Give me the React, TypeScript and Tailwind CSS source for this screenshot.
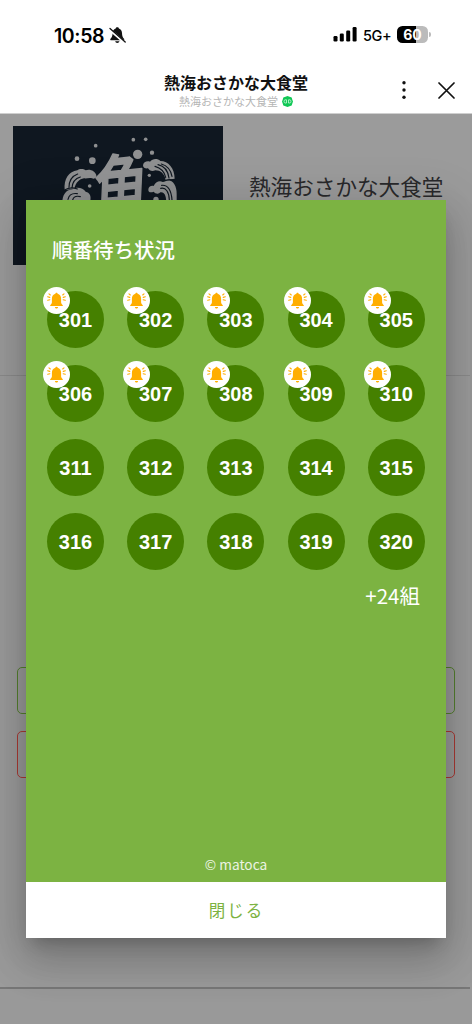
import React from "react";

const SHOP = "熱海おさかな大食堂";
const CALLED = 10;
const tickets = Array.from({ length: 20 }, (_, i) => 301 + i);

function BellOff() {
  return (
    <svg className="ml-[4px] mt-px h-[18px] w-[17px]" viewBox="0 0 17 18">
      <path d="M8.3 1.2c-.9 0-1.500.5-1.600 1.200C4.500 3 3.700 4.800 3.600 7c-.1 3-.8 4.300-2.100 5.800-.6.8-.2 1.500.7 1.500h12.100c1 0 1.300-.8.700-1.500-1.300-1.500-1.900-2.800-2-5.800-.1-2.200-1-4-3.100-4.600-.1-.7-.7-1.200-1.600-1.200ZM6.200 15.200c.2 1 1.100 1.700 2.100 1.700s1.900-.7 2.100-1.700Z" fill="#111" />
      <path d="M.3 3.200 15.500 16.600" stroke="#fff" strokeWidth="2.600" />
      <path d="M1 2.400 16.200 16" stroke="#111" strokeWidth="1.300" strokeLinecap="round" />
    </svg>
  );
}

function StatusBar() {
  return (
    <div className="flex h-[68px] items-start pl-[54px] pr-[41px] pt-[25px] text-black">
      <span className="mt-px w-[51px] whitespace-nowrap font-[Inter] text-[19.5px] font-semibold leading-5 tracking-[-0.4px]">10:58</span>
      <BellOff />
      <svg className="ml-auto mt-[2px] h-[16px] w-[24px]" viewBox="0 0 24 16">
        <rect x="0.5" y="9" width="4" height="5.500" rx="1.200" />
        <rect x="6.800" y="6.500" width="4" height="8" rx="1.200" />
        <rect x="13.200" y="3.500" width="4" height="11" rx="1.200" />
        <rect x="19.600" y="0" width="4" height="14.500" rx="1.200" />
      </svg>
      <span className="ml-[6px] w-[28px] whitespace-nowrap font-[Inter] text-[14.5px] font-medium leading-[21px] tracking-[-0.4px]">5G+</span>
      <div className="ml-[6px] mt-px flex h-[17px] w-[31px] items-center justify-center rounded-[5.5px] bg-[linear-gradient(90deg,#000_60%,#bbb_60%)] font-[Inter] text-[14px] font-bold text-white">
        60
      </div>
      <span className="ml-[1px] mt-[7px] h-[5px] w-[2px] rounded-r-full bg-[#bbb]" />
    </div>
  );
}

function TitleBar() {
  return (
    <header className="grid h-[46px] grid-cols-[100px_1fr_100px] border-b border-[#cfcfcf]">
      <div />
      <div className="flex flex-col items-center pt-[4px]">
        <h1 className="text-[16px] font-bold leading-5 text-[#111]">{SHOP}</h1>
        <p className="mt-[2px] flex items-center gap-[4px] text-[11px] leading-[15px] text-[#b5b5b5]">
          {SHOP}
          <svg className="h-[11px] w-[11px]" viewBox="0 0 11 11">
            <path d="M5.500 0 7.500.8 9.700 1.500 10.300 3.700 11 5.500 10.300 7.400 9.700 9.600 7.500 10.300 5.500 11 3.500 10.300 1.300 9.600.7 7.400 0 5.500.7 3.700 1.300 1.500 3.500.8Z" fill="#10c755" />
            <path d="M3 3.800h1.500v3.200H3c-1.300 0-1.300-3.200 0-3.200ZM6.500 3.800H8c1.300 0 1.300 3.200 0 3.200H6.500Z" fill="none" stroke="#c9f7d8" strokeWidth=".8" />
          </svg>
        </p>
      </div>
      <div className="flex items-start justify-end gap-[32px] pr-[17px] pt-[13px]">
        <svg className="h-[18px] w-[4px]" viewBox="0 0 4 18" fill="#111">
          <circle cx="2" cy="1.700" r="1.700" />
          <circle cx="2" cy="9" r="1.700" />
          <circle cx="2" cy="16.300" r="1.700" />
        </svg>
        <svg className="mt-px h-[17px] w-[17px]" viewBox="0 0 17 17" stroke="#111" strokeWidth="1.700" strokeLinecap="round">
          <path d="m1 1 15 15M16 1 1 16" />
        </svg>
      </div>
    </header>
  );
}

function ShopLogo() {
  return (
    <svg className="h-[139px] w-[210px]" viewBox="39 48 630 417">
      <rect x="39" y="48" width="630" height="417" fill="#0f1720" />
      <g fill="#8f9091">
        <circle cx="231" cy="146" r="7" />
        <circle cx="277" cy="152" r="10" />
        <circle cx="287" cy="107" r="5.500" />
        <circle cx="400" cy="89" r="5.500" />
        <circle cx="437" cy="88" r="5.500" />
        <circle cx="413" cy="133" r="14" />
        <circle cx="456" cy="128" r="6.500" />
        <circle cx="269" cy="228" r="5.500" />
        <circle cx="448" cy="196" r="5" />
        <circle cx="468" cy="268" r="8" />
        <path d="M194 240C191 207 207 184 232 181c6-6 19-5 25 0 13-5 28 2 32 15 2 8-6 12-13 9-8-3-17 2-24 0-14 2-25 13-29 31Z" />
        <path d="M187 278c0-22 10-38 30-40 13-9 32-5 40 7 12 2 17 13 14 27H187Z" />
        <path d="M429 166c1-10 12-14 21-11 8-10 23-10 31-2 24 0 43 22 43 53l-27 4c-4-20-16-29-31-29-10 4-18 1-22-6-7 1-15-1-15-9Z" />
        <path d="M445 239c0-8 8-13 16-11 5-12 17-17 27-12 24-16 43 6 42 36v30h-31c0-20-3-37-18-35-5 7-16 4-20-2-9 4-16 2-16-6Z" />
      </g>
      <g fill="none" stroke="#0f1720" strokeWidth="3.500" strokeLinecap="round">
        <path d="M207 232c0-20 10-34 26-40M216 234c1-17 11-29 25-33" />
        <path d="M204 268c3-13 14-19 28-17M218 270c3-10 12-13 23-10" />
        <path d="M192 241c12-8 26-10 40-4" />
        <path d="M474 164c18 4 30 18 33 40M465 169c18 5 28 15 32 33M484 162c18 5 28 17 32 37" />
        <path d="M482 235c16-4 25 12 26 35M485 226c20-2 29 17 31 44M491 214c14-8 24-7 34 0" />
      </g>
      <text
        transform="matrix(1 -0.1 -0.06 1.35 276 330)"
        fontSize="168"
        fontWeight="500"
        fill="#929394"
        stroke="#929394"
        strokeWidth="4"
        strokeLinejoin="round"
        fontFamily="Noto Sans CJK JP, sans-serif"
      >
        魚
      </text>
    </svg>
  );
}

function CallBadge() {
  return (
    <span className="absolute -left-[4px] -top-[4px] flex size-[27px] items-center justify-center rounded-full bg-white">
      <svg className="h-[17px] w-[19px]" viewBox="0 0 19 17">
        <path d="M9.500.7c-.7 0-1.100.5-1.100 1.100-2.300.6-3.500 2.400-3.500 5v3.500c0 1.200-.7 1.900-1.700 2.900v.9h12.600v-.9c-1-1-1.700-1.700-1.700-2.900V6.800c0-2.600-1.200-4.400-3.500-5 0-.6-.4-1.100-1.100-1.100ZM7.900 14.900h3.200c-.2 1-.9 1.500-1.600 1.500s-1.400-.5-1.600-1.500Z" fill="#ffae00" />
        <path d="m3.300 3-1.300-1.100M2.800 5.400.6 4.800M2.900 7.800l-2.200.5M15.700 3l1.300-1.100M16.200 5.400l2.200-.6M16.100 7.800l2.200.5" fill="none" stroke="#ffae00" strokeWidth="1.100" strokeLinecap="round" />
      </svg>
    </span>
  );
}

function QueueDialog() {
  return (
    <section className="flex h-[738px] w-[420px] flex-col bg-[#7cb342] text-white shadow-[0_11px_15px_-7px_rgba(0,0,0,0.2),0_24px_38px_3px_rgba(0,0,0,0.14),0_9px_46px_8px_rgba(0,0,0,0.12)]">
      <h2 className="pl-[26px] pt-[35px] text-[20.5px] font-medium leading-[28px]">順番待ち状況</h2>
      <ul className="ml-[21px] mt-[27.5px] grid grid-cols-[repeat(5,57px)] gap-x-[23.2px] gap-y-[17.2px]">
        {tickets.map((n, i) => (
          <li
            key={n}
            className="relative flex size-[57px] items-center justify-center rounded-full bg-[#458000] font-['Liberation_Sans'] text-[20px] font-bold"
          >
            {i < CALLED && <CallBadge />}
            <span className="relative pt-px">{n}</span>
          </li>
        ))}
      </ul>
      <p className="mr-[26px] mt-[9.5px] text-right text-[20.5px] leading-[30px]">+24組</p>
      <p className="mt-auto pb-[8px] text-center text-[13.7px] leading-5 text-white/85">© matoca</p>
      <button className="h-[56px] shrink-0 bg-white pl-px text-[16.5px] font-normal tracking-[2px] text-[#7cb342]">閉じる</button>
    </section>
  );
}

export default function App() {
  return (
    <div className="flex h-[1024px] w-[472px] flex-col overflow-hidden bg-white font-['Noto_Sans_CJK_JP',sans-serif]">
      <StatusBar />
      <TitleBar />
      <div className="relative min-h-0 flex-1 bg-[#999]">
        <main className="mr-[2px] flex h-[875px] flex-col border-b-2 border-[#777] bg-[#9b9b9b]">
          <div className="flex h-[262px] shrink-0 border-b border-[#8b8b8b] pl-[13px] pt-[12px]">
            <ShopLogo />
            <p className="ml-[26px] mt-[44px] whitespace-nowrap text-[21.6px] leading-[32px] text-[#29292b]">{SHOP}</p>
          </div>
          <div className="mt-[291px] flex flex-col gap-[17px] pl-[17px] pr-[15px]">
            <div className="h-[47px] rounded-[5px] border-[1.5px] border-[#55802f]" />
            <div className="h-[47px] rounded-[5px] border-[1.5px] border-[#ab3a35]" />
          </div>
        </main>
        <div className="absolute inset-0 flex justify-center overflow-hidden pt-[86px]">
          <QueueDialog />
        </div>
      </div>
    </div>
  );
}
